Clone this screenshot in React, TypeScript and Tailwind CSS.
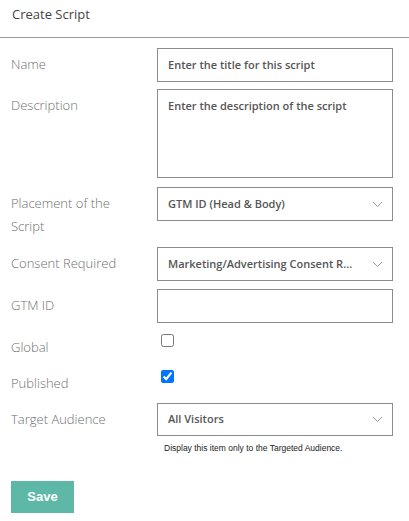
import React from 'react';

const labelCls = "w-[146px] shrink-0 pt-[5px] text-[13px] leading-[23px] font-light text-[#6f6f6f]";
const boxCls = "w-[236px] border border-[#8c8c8c] bg-white text-[11px] font-semibold text-[#555]";

function Chevron() {
  return (
    <svg width="11" height="7" viewBox="0 0 11 7" className="shrink-0">
      <polyline points="1,1 5.5,5.5 10,1" fill="none" stroke="#9a9a9a" strokeWidth="1" />
    </svg>
  );
}

function SelectBox({ value, height = 'h-[34px]' }: { value: string; height?: string }) {
  return (
    <div className={`${boxCls} ${height} flex items-center pl-[10px] pr-[9px]`}>
      <span className="flex-1 whitespace-nowrap pr-[8px]">{value}</span>
      <Chevron />
    </div>
  );
}

export default function App() {
  return (
    <div className="w-[409px] min-h-[521px] bg-white" style={{ fontFamily: "'Open Sans', 'Noto Sans', sans-serif" }}>
      <div className="h-[38px] border-b border-[#999] px-[12px] pt-[5px] text-[13px] text-[#444]">Create Script</div>

      <div className="px-[11px] pt-[10px]">
        <div className="flex mb-[7px]">
          <div className={labelCls}>Name</div>
          <div className={`${boxCls} h-[34px] flex items-center pl-[10px]`}>Enter the title for this script</div>
        </div>

        <div className="flex mb-[9px]">
          <div className={labelCls}>Description</div>
          <div className={`${boxCls} h-[89px] pl-[10px] pt-[8px]`}>Enter the description of the script</div>
        </div>

        <div className="flex mb-[9px]">
          <div className={labelCls}>Placement of the<br />Script</div>
          <div className="self-start">
            <SelectBox value="GTM ID (Head & Body)" />
          </div>
        </div>

        <div className="flex mb-[8px]">
          <div className={labelCls}>Consent Required</div>
          <SelectBox value="Marketing/Advertising Consent R..." />
        </div>

        <div className="flex mb-[8px]">
          <div className={labelCls}>GTM ID</div>
          <div className={`${boxCls} h-[34px]`} />
        </div>

        <div className="flex mb-[8px]">
          <div className={labelCls}>Global</div>
          <input type="checkbox" className="m-0 ml-[4px] mt-[3px] h-[13px] w-[13px] self-start" />
        </div>

        <div className="flex mb-[8px]">
          <div className={labelCls}>Published</div>
          <input type="checkbox" defaultChecked className="m-0 ml-[4px] mt-[3px] h-[13px] w-[13px] self-start" />
        </div>

        <div className="flex">
          <div className={labelCls}>Target Audience</div>
          <div>
            <SelectBox value="All Visitors" height="h-[33px]" />
            <div className="pl-[7px] pt-[7px] text-[8.5px] leading-[11px] text-[#222]" style={{ fontFamily: "'Liberation Sans', Arial, sans-serif" }}>
              Display this item only to the Targeted Audience.
            </div>
          </div>
        </div>

        <button
          className="mt-[27px] h-[32px] w-[63px] bg-[#5eb8a8] text-[13px] font-bold text-white"
          style={{ fontFamily: "'Liberation Sans', Arial, sans-serif" }}
        >
          Save
        </button>
      </div>
    </div>
  );
}
